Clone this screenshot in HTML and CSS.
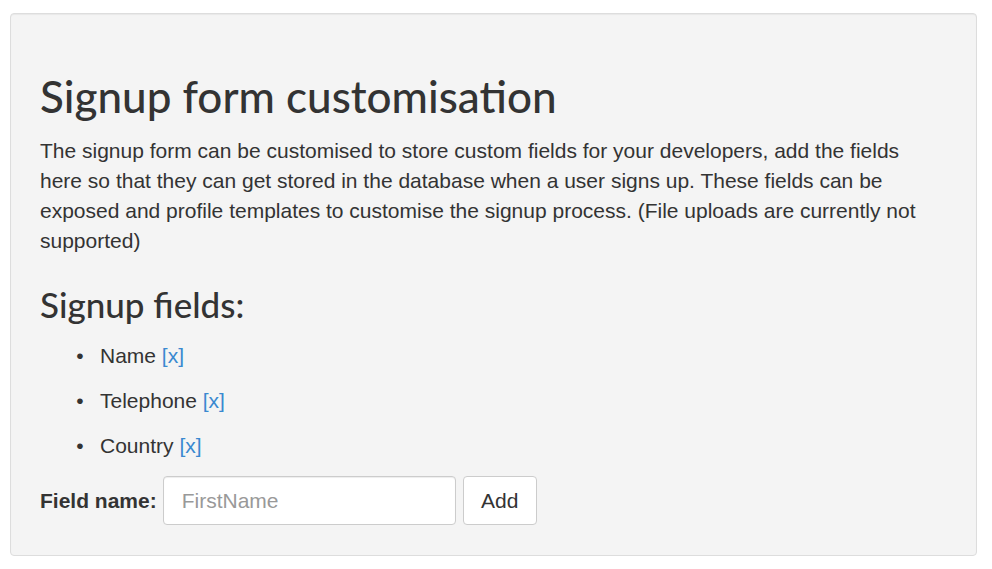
FILE: index.html
```html
<!DOCTYPE html>
<html lang="en">
<head>
<meta charset="utf-8">
<title>Signup form customisation</title>
<link rel="stylesheet" href="styles.css">
</head>
<body>
<div class="well">
  <h1 class="title">Signup form customisation</h1>
  <p class="lead">The signup form can be customised to store custom fields for your developers, add the fields here so that they can get stored in the database when a user signs up. These fields can be exposed and profile templates to customise the signup process. (File uploads are currently not supported)</p>
  <h2 class="subtitle">Signup fields:</h2>
  <ul class="fields">
    <li>Name <a href="#" class="remove">[x]</a></li>
    <li>Telephone <a href="#" class="remove">[x]</a></li>
    <li>Country <a href="#" class="remove">[x]</a></li>
  </ul>
  <form class="add-form">
    <label class="add-label" for="fieldname">Field name:</label>
    <input id="fieldname" class="add-input" type="text" placeholder="FirstName">
    <button type="button" class="add-btn">Add</button>
  </form>
</div>
</body>
</html>
```

FILE: styles.css
```css
html, body {
  margin: 0;
  padding: 0;
  background: #ffffff;
}
body {
  padding: 13px 15px 0 10px;
  font-family: "Liberation Sans", Arial, sans-serif;
  font-size: 21px;
  color: #333333;
}
.well {
  box-sizing: border-box;
  width: 967px;
  background: #f4f4f4;
  border: 1px solid #dddddd;
  border-radius: 4px;
  box-shadow: inset 0 1px 1px rgba(0,0,0,0.05);
  padding: 57px 29px 30px 29px;
}
.title {
  font-family: Lato, "Open Sans", sans-serif;
  font-weight: 500;
  font-size: 44px;
  line-height: 50px;
  margin: 0 0 15px 0;
  color: #333333;
}
.lead {
  margin: 0 0 28px 0;
  max-width: 895px;
  line-height: 30px;
}
.subtitle {
  font-family: Lato, "Open Sans", sans-serif;
  font-weight: 500;
  font-size: 35px;
  line-height: 40px;
  margin: 0 0 17px 0;
  color: #333333;
}
.fields {
  margin: 0;
  padding-left: 60px;
  list-style: disc;
}
.fields li {
  line-height: 30px;
  margin-bottom: 15px;
}
.fields li::marker {
  content: "\2022\2002\00a0";
}
.remove {
  color: #3a89d0;
  text-decoration: none;
}
.add-form {
  display: flex;
  align-items: center;
}
.add-label {
  font-weight: bold;
  margin-right: 6px;
}
.add-input {
  box-sizing: border-box;
  width: 293px;
  height: 49px;
  margin-right: 7px;
  border: 1px solid #cccccc;
  border-radius: 4px;
  background: #ffffff;
  padding: 0 18px;
  font-family: "Liberation Sans", Arial, sans-serif;
  font-size: 21px;
  color: #333333;
  box-shadow: inset 0 1px 1px rgba(0,0,0,0.075);
}
.add-input::placeholder {
  color: #999999;
}
.add-btn {
  box-sizing: border-box;
  width: 74px;
  height: 49px;
  border: 1px solid #cccccc;
  border-radius: 4px;
  background: #ffffff;
  font-family: "Liberation Sans", Arial, sans-serif;
  font-size: 21px;
  color: #333333;
  padding: 0;
}
```
